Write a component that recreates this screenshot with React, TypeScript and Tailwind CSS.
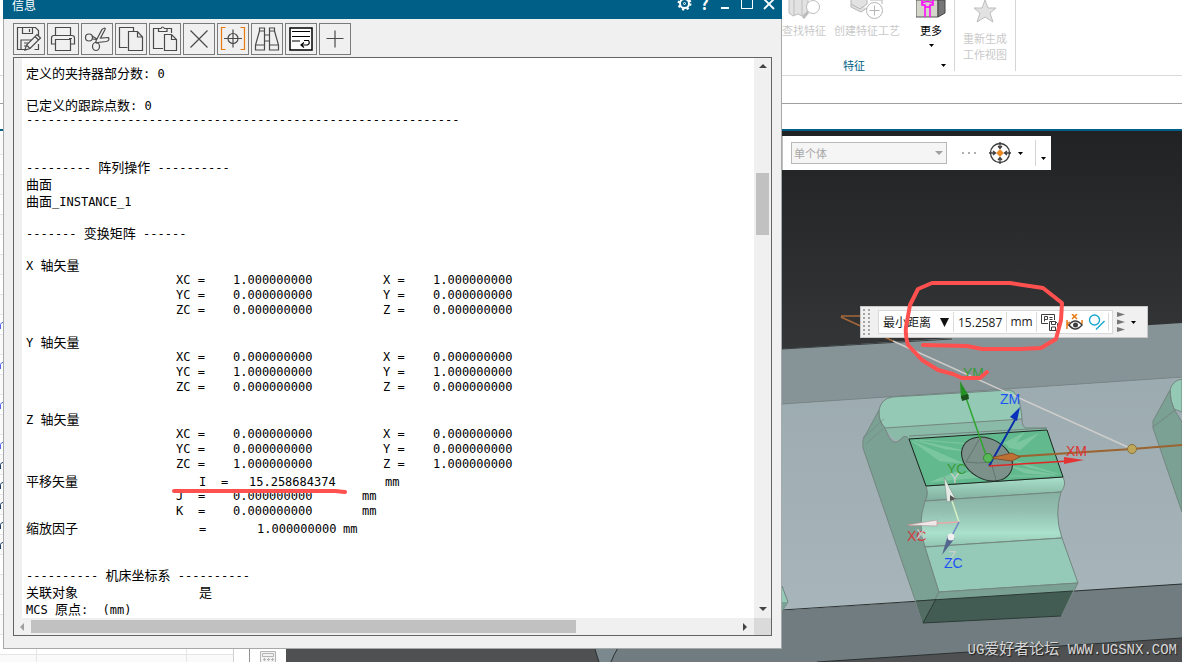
import type { ReactNode } from 'react';

type Cell = [width: string, text: string];
type Line = string | Cell[];

const vectorRow = (axis: string, value: string, otherValue = value): Cell[] => [
  ['w-[150px]', ''],
  ['w-[57px]', `${axis}C =`],
  ['w-[150px]', value],
  ['w-[50px]', `${axis} =`],
  ['', otherValue],
];

const ONE = '1.000000000';
const ZERO = '0.000000000';

const lines: Line[] = [
  '定义的夹持器部分数: 0',
  '',
  '已定义的跟踪点数: 0',
  '-'.repeat(60),
  '',
  '',
  '--------- 阵列操作 ----------',
  '曲面',
  '曲面_INSTANCE_1',
  '',
  '------- 变换矩阵 ------',
  '',
  'X 轴矢量',
  vectorRow('X', ONE),
  vectorRow('Y', ZERO),
  vectorRow('Z', ZERO),
  '',
  'Y 轴矢量',
  vectorRow('X', ZERO),
  vectorRow('Y', ONE),
  vectorRow('Z', ZERO),
  '',
  'Z 轴矢量',
  vectorRow('X', ZERO),
  vectorRow('Y', ZERO),
  vectorRow('Z', ONE),
  [['w-[173px]', '平移矢量'], ['w-[22px]', 'I'], ['w-[28px]', '='], ['w-[136px]', '15.258684374'], ['', 'mm']],
  [['w-[150px]', ''], ['w-[22px]', 'J'], ['w-[35px]', '='], ['w-[129px]', ZERO], ['', 'mm']],
  [['w-[150px]', ''], ['w-[22px]', 'K'], ['w-[35px]', '='], ['w-[129px]', ZERO], ['', 'mm']],
  [['w-[173px]', '缩放因子'], ['w-[58px]', '='], ['w-[86px]', ONE], ['', 'mm']],
  '',
  '',
  '---------- 机床坐标系 ----------',
  [['w-[173px]', '关联对象'], ['', '是']],
  'MCS 原点:  (mm)',
];

const CJK = /([\u4e00-\u9fff]+)/;

// Chinese runs are set one pixel larger than the monospaced Latin text.
function MixedText({ text }: { text: string }) {
  return (
    <>
      {text.split(CJK).map((part, i) =>
        CJK.test(part) ? (
          <span key={i} className="font-['Noto_Sans_CJK_SC',sans-serif] text-[13px]">
            {part}
          </span>
        ) : (
          part
        ),
      )}
    </>
  );
}

function ReportLine({ line }: { line: Line }) {
  const content = typeof line === 'string' ? line : line.map(([, text]) => text).join('');
  const height = CJK.test(content) ? 'h-[17px] leading-[17px]' : 'h-[15px] leading-[15px]';
  return (
    <div className={`flex items-baseline whitespace-pre ${height}`}>
      {typeof line === 'string' ? (
        <span>
          <MixedText text={line} />
        </span>
      ) : (
        line.map(([width, text], i) => (
          <span key={i} className={`shrink-0 ${width}`}>
            <MixedText text={text} />
          </span>
        ))
      )}
    </div>
  );
}

function ToolIcon({ children }: { children: ReactNode }) {
  return (
    <svg width="26" height="26" viewBox="0 0 26 26" fill="none" stroke="#4a4a4a" strokeWidth="1.2">
      {children}
    </svg>
  );
}

const tools: { name: string; icon: ReactNode }[] = [
  {
    name: '另存为',
    icon: (
      <>
        <path d="M9 23.5H1.5V1.5h18l3 3v6M22.500 18v5.500h-4M6.500 1.500v6h10v-6M13.500 3v3M5 23v-9h12M8 17h4M8 20h2" />
        <path d="M9 24l1.500-5L21 8.500l3.500 3.500L14 22.500zM10.500 19l3.500 3.500M19 10.500l3.500 3.500" fill="#f0f0f0" />
      </>
    ),
  },
  {
    name: '打印',
    icon: (
      <>
        <path d="M5.500 9V1.500h15V9M5.500 18H1.500V12q0-2.500 2.500-2.500h18q2.500 0 2.500 2.500v6h-4M19 12.500h3" />
        <path d="M5.500 13.500h15v11h-15z" />
      </>
    ),
  },
  {
    name: '剪切',
    icon: (
      <>
        <circle cx="5" cy="11.500" r="3.500" />
        <ellipse cx="12" cy="20.500" rx="3.500" ry="4" />
        <path d="M8 10l5 3L18 3.500q4-3 3 0L16.500 12l8-.5q1.500 3-2 4l-9 1-1 1M8.500 13l4 .5-1 3.500" />
      </>
    ),
  },
  {
    name: '复制',
    icon: (
      <>
        <path d="M9.500 21.500h-8v-20h14v4" />
        <path d="M10.500 5.500h9l5 5.500v13.500h-14zM19.500 5.500V11h5" />
      </>
    ),
  },
  {
    name: '粘贴',
    icon: (
      <>
        <path d="M11 22.500H1.500v-20h5M15 2.500h4.500V7M6.500 5.500v-3h2.500q1.500-3 3.500 0H15v3z" />
        <path d="M12.500 8.500h7l5 5v11h-12zM19.500 8.500v5h5" />
      </>
    ),
  },
  { name: '删除', icon: <path d="M4.500 4.500l17 17M21.500 4.500l-17 17" /> },
  {
    name: '定位',
    icon: (
      <>
        <path d="M5.500 1.500h-4v22h4M20.500 1.500h4v22h-4" stroke="#e87a10" />
        <circle cx="13" cy="12.500" r="5" />
        <path d="M13 3.500v18M4 12.500h18" />
      </>
    ),
  },
  {
    name: '查找',
    icon: (
      <path d="M5.500 2h5v3h-5zM15.500 2h5v3h-5zM5.500 5l-4 14v5h9V5M20.500 5l4 14v5h-9V5M1.500 19h9M15.500 19h9M10.500 9h5v6h-5" />
    ),
  },
  {
    name: '自动换行',
    icon: (
      <>
        <path d="M2 2h22v22H2z" fill="#fff" stroke="#000" strokeWidth="1.500" />
        <path d="M4 5.500h18M4 10.500h18M4 15h8M16 14.500h4.500q2 3-1 4.500h-6M16 16.500L13 19l3 2.500" stroke="#000" />
      </>
    ),
  },
  { name: '新建', icon: <path d="M13 4.500v17M4.500 12.500h17" /> },
];

function Triangle({ dir, color = '#444444' }: { dir: 'up' | 'down' | 'left' | 'right'; color?: string }) {
  const paths = { up: 'M1 6h8L5 2z', down: 'M1 3h8L5 7z', left: 'M7 1v8L3 5z', right: 'M3 1v8l4-4z' };
  return (
    <svg width="10" height="10" viewBox="0 0 10 10" className="shrink-0">
      <path d={paths[dir]} fill={color} />
    </svg>
  );
}

function Caret() {
  return (
    <svg width="5" height="3" viewBox="0 0 5 3">
      <path d="M0 0h5L2.500 3z" fill="#000" />
    </svg>
  );
}

function InfoWindow() {
  return (
    <section className="absolute top-0 bottom-[13px] left-[3px] z-20 flex w-[779px] flex-col border-x border-b border-[#a5a9aa] bg-[#f0f0f0]">
      <header className="-mx-px flex h-[19px] shrink-0 items-start justify-between bg-[#005f87] pr-1.5 pl-[9px] text-white">
        <h1 className="mt-[-4px] text-[12px] leading-[18px]">信息</h1>
        <div className="mt-[-4px] flex items-center gap-[5px]">
          <button aria-label="设置" className="flex size-[15px] items-center justify-center">
            <svg width="15" height="15" viewBox="0 0 15 15" fill="none" stroke="#fff">
              <circle cx="7.500" cy="7.500" r="4.500" strokeWidth="2" />
              <circle cx="7.500" cy="7.500" r="6" strokeWidth="2" strokeDasharray="2.300 2.412" />
              <circle cx="7.500" cy="7.500" r="1" />
            </svg>
          </button>
          <button aria-label="帮助" className="size-[15px] text-[16px] leading-[15px] font-bold">
            ?
          </button>
          <button aria-label="最小化" className="flex size-[15px] items-end justify-center pb-0.5">
            <span className="h-0.5 w-2 bg-white" />
          </button>
          <button aria-label="最大化" className="ml-[2px] flex size-[15px] items-center justify-center">
            <span className="h-[11px] w-3 border border-t-2 border-white" />
          </button>
          <button aria-label="关闭" className="ml-[2px] flex size-[15px] items-center justify-center">
            <svg width="12" height="12" viewBox="0 0 12 12" stroke="#fff" strokeWidth="1.800">
              <path d="M1 1l10 10M11 1L1 11" />
            </svg>
          </button>
        </div>
      </header>

      <div className="flex gap-0.5 px-[9px] pt-1 pb-0.5">
        {tools.map(({ name, icon }) => (
          <button
            key={name}
            aria-label={name}
            className="flex size-8 items-center justify-center border border-[#7b7b7b]"
          >
            <ToolIcon>{icon}</ToolIcon>
          </button>
        ))}
      </div>

      <div className="mx-[9px] mb-3 grid min-h-0 flex-1 grid-cols-[1fr_17px] grid-rows-[1fr_17px] border border-[#646464] bg-[#f0f0f0]">
        <div className="ml-2 overflow-hidden bg-white pt-1.5 pl-1 font-['DejaVu_Sans_Mono','Noto_Sans_CJK_SC',monospace] text-[12px] text-black">
          {lines.map((line, i) => (
            <ReportLine key={i} line={line} />
          ))}
        </div>
        <div className="flex flex-col items-center justify-between py-1">
          <Triangle dir="up" />
          <div className="mt-[101px] mb-auto h-[62px] w-[13px] bg-[#c1c1c1]" />
          <Triangle dir="down" />
        </div>
        <div className="flex items-center pr-1 pl-[3px]">
          <Triangle dir="left" color="#a0a0a0" />
          <div className="mr-auto ml-1 h-[13px] w-[545px] bg-[#c1c1c1]" />
          <Triangle dir="right" />
        </div>
        <div className="bg-[#dadada]" />
      </div>
    </section>
  );
}

function Ribbon() {
  return (
    <div className="relative shrink-0 bg-white">
      <div className="flex h-[76px] border-b border-[#dadada] pl-[782px] text-[11px] leading-4 whitespace-nowrap">
        <div className="flex w-[172px] flex-col">
          <div className="flex flex-1 text-[#c9c9c9]">
            <button className="flex w-[44px] flex-col items-center">
              <svg width="36" height="22" viewBox="0 0 36 22" fill="#e2e2e2" stroke="#bdbdbd">
                <path d="M3 0v13l4 3 5-2 4 2 6-4V0" />
                <path d="M8 0v15M16 0v15" />
                <circle cx="27" cy="7" r="6.500" fill="#fff" />
                <path d="M22 12l-5 6" strokeWidth="3" />
              </svg>
              查找特征
            </button>
            <button className="ml-2 flex w-[66px] flex-col items-center">
              <svg width="34" height="22" viewBox="0 0 34 22" fill="#e2e2e2" stroke="#b5b5b5">
                <path d="M1 0v4l9 5 7-5V0M1 4v3l10 5 6-4" />
                <path d="M20 0h12v4" fill="none" />
                <circle cx="24.500" cy="10.500" r="8" fill="#fff" />
                <path d="M24.500 5.500v10M19.500 10.500h10" />
              </svg>
              创建特征工艺
            </button>
            <button className="ml-[16px] flex w-[30px] flex-col items-center text-black">
              <svg width="30" height="22" viewBox="0 0 30 22">
                <path d="M0 0h22v17H0z" fill="#d4d6c9" stroke="#555" />
                <path d="M22 0h7v13l-7 4z" fill="#777" stroke="#444" />
                <path d="M6 0v5h3v12M17 0v5h-3v12M6 3q5-3 11 0M9 7h5" fill="none" stroke="#ff00ff" strokeWidth="1.500" />
              </svg>
              更多
              <span className="mt-1.5">
                <Caret />
              </span>
            </button>
          </div>
          <div className="flex h-[20px] items-center justify-end gap-[76px] pr-2 text-[#005f87]">
            特征
            <button aria-label="特征选项" className="p-0">
              <Caret />
            </button>
          </div>
        </div>
        <div className="mb-1 flex w-[62px] flex-col items-center border-x border-[#d5d5d5]">
          <button className="flex flex-col items-center text-[#c9c9c9]">
            <svg width="24" height="30" viewBox="0 0 24 30">
              <path d="M12 0l3 8h8l-6 5 3 9-8-5-8 5 3-9-6-5h8z" fill="#e2e2e2" stroke="#bdbdbd" />
            </svg>
            <span>重新生成</span>
            <span>工作视图</span>
          </button>
        </div>
      </div>
      <div className="h-[28px] border-b border-[#a0a0a0]" />
      <div className="h-[27px] border-b-2 border-[#005f87]" />
    </div>
  );
}

// Rows of the tree whose status glyph shows beside the window.
const navMarks: Record<number, string> = {
  9: '#5560e8',
  11: '#5560e8',
  13: '#5560e8',
  15: '#5560e8',
  16: '#20406a',
  17: '#20406a',
  18: '#20406a',
  19: '#20406a',
  20: '#20406a',
};

function Navigator() {
  return (
    <aside className="flex w-[286px] shrink-0 overflow-hidden bg-white">
      <div className="w-[234px] border-r border-[#d0d0d0] pt-1">
        {Array.from({ length: 27 }, (_, row) => (
          <div key={row} className="flex h-5 border-b border-[#e5e5e5] odd:bg-[#fafafa]">
            <div className="flex w-[37px] items-center border-r border-[#e5e5e5]">
              {navMarks[row] && (
                <svg width="3" height="8" viewBox="0 0 3 8" fill="none" stroke={navMarks[row]}>
                  <path d="M.5 8V3.500Q1 1.500 3 1.500" />
                </svg>
              )}
            </div>
            <div className="w-[150px] border-r border-[#e5e5e5]" />
          </div>
        ))}
      </div>
      <div className="ml-[15px] flex flex-1 items-end justify-center border-l border-[#909090]">
        <svg width="16" height="11" viewBox="0 0 16 11" fill="#f2f2f2" stroke="#b5b5b5">
          <path d="M.5 14V.5h15V14M2.500 2.500h11v3h-11z" />
          <path d="M3 8.500h3M7 8.500h3M11 8.500h3M4.500 7v3M8.500 7v3M12.500 7v3" />
        </svg>
      </div>
    </aside>
  );
}

function Scene() {
  return (
    <svg
      className="absolute inset-0 size-full"
      viewBox="286 131 896 531"
      preserveAspectRatio="xMinYMin slice"
      fontFamily="Liberation Sans, Arial, sans-serif"
      fontSize="14"
    >
      <defs>
        <linearGradient id="sky" x1="0" y1="0" x2="0" y2="1">
          <stop offset="0" stopColor="#212223" />
          <stop offset="1" stopColor="#505153" />
        </linearGradient>
        <linearGradient id="deck" x1="0" y1="0" x2="0" y2="1">
          <stop offset="0" stopColor="#9cabb0" />
          <stop offset="1" stopColor="#a8b6bb" />
        </linearGradient>
        <linearGradient id="step" x1="0" y1="0" x2="0" y2="1">
          <stop offset="0" stopColor="#a9e0cb" />
          <stop offset="1" stopColor="#80ae9e" />
        </linearGradient>
        <linearGradient id="groove" x1="0" y1="0" x2="0" y2="1">
          <stop offset="0" stopColor="#86b1a2" />
          <stop offset="0.350" stopColor="#93bfb0" />
          <stop offset="0.750" stopColor="#aae1cc" />
          <stop offset="1" stopColor="#8fc3b0" />
        </linearGradient>
      </defs>
      <rect x="286" y="131" width="896" height="531" fill="url(#sky)" />
      <path d="M595 350L782 349l400-26v54L782 404H595z" fill="#879497" />
      <path d="M595 412L782 404l400-27v207L782 611l-187 10z" fill="url(#deck)" />
      <path d="M782 404l400-27" stroke="#7b8789" />
      <path d="M593 640L782 611l400-27v54L817 662H599z" fill="#717c80" />
      <path d="M593 640h27l-9 22h-12z" fill="#7b898f" />
      <path d="M782 610l400-26M817 662l365-24M593 643l6 19M618 648q-4 6-7 14" stroke="#2c3232" fill="none" />
      <path d="M760 349h22l170-10" stroke="#3a4042" fill="none" />
      <path d="M779 586l3 0 6 16-6 9h-3z" fill="#94cab7" stroke="#6d837c" />
      <path d="M782 602h6l-6 9z" fill="#7ba195" />

      <path d="M885 428l132-8 6 7 24 1v3l-138 8-4-4-6 5-6-1z" fill="#8abba9" />
      <g stroke="#73867f" strokeWidth="1">
        <path d="M879 410q2-11 13-13l117-7q11 1 13 29l-137 9q-7-8-6-18z" fill="#94c9b6" />
        <path d="M1022 419q0 8 4 9l21 0M909 436l138-8" fill="none" />
        <path d="M879 410q-1 12 6 18c4 10 8 18 15 12 5-7 8-2 9-1l17 47q3 8-1 15-5 16 0 46l14 45-16 31-60-175q-1-10 3-14z" fill="#7ba195" />
        <path d="M863 438l21-19M866 444l19-17" fill="none" opacity=".6" />
        <path d="M926 486l137-9q4 8-2 15l-136 9q4-6 1-15z" fill="url(#step)" />
        <path d="M925 501l136-9q-7 23 1 46l-137 9q-8-22 0-46z" fill="url(#groove)" />
        <path d="M925 547l137-9 16 45-139 9z" fill="#94cab7" />
        <path d="M939 592l139-9-17 33-138 7z" fill="#7ba195" />
      </g>
      <path d="M916 601l157-10-12 25-138 7z" fill="#435c53" />
      <path d="M916 601l20-2-13 24z" fill="#536d64" />
      <path d="M916 601l157-10M923 623l13-24M923 623l138-7" stroke="#2b3a35" fill="none" />
      <path d="M909 439l138-9 16 47-137 9z" fill="#62b98d" stroke="#1b2520" />
      <path d="M912 441l50 22-22-2zM914 440l52 11-20-2zM920 440l50 4zM931 482l60-6-35-4zM936 480l40-9zM1004 443l20-10-12 15zM1008 447l30-13-18 16zM1012 460l46 14-30-7zM1010 466l45 9-30-2zM1000 476l50 0z" fill="#8acfac" stroke="#9ad7b8" strokeWidth=".5" opacity=".6" />
      <ellipse cx="987" cy="459" rx="27" ry="20" transform="rotate(30 987 459)" fill="#7b918a" stroke="#252b29" />
      <path d="M980 438l-14 24q12 2 25 0l5 18" stroke="#66756f" fill="none" />

      <path d="M1170 390q2-9 12-11v33l-8-3q-4-8-4-19z" fill="#94c9b6" stroke="#73867f" />
      <path d="M1170 390l-17 31v7l29 84v-90l-8-13q-4-8-4-19z" fill="#7ba195" stroke="#73867f" />
      <path d="M1153 427l22-17" stroke="#73867f" />

      <path d="M841 316h24M841 317l52 24" stroke="#a5683a" strokeWidth="1.500" />
      <path d="M893 341l239 108" stroke="#cfcccb" strokeWidth="1.500" />
      <path d="M1010 457l122-8 50-4" stroke="#9b632f" strokeWidth="2" fill="none" />
      <circle cx="1132" cy="449" r="4.500" fill="#bfa75a" stroke="#857339" />

      <text x="963" y="378" fill="#379b37">YM</text>
      <path d="M987 458l-23-66" stroke="#2fa52f" strokeWidth="1.500" />
      <path d="M960 381l1 18 8-3z" fill="#259225" />
      <path d="M961 396l1 5 7-2-1-5z" fill="#1c521c" />
      <text x="1000" y="404" fill="#1d52f4">ZM</text>
      <path d="M989 466l27-48" stroke="#0a2da8" strokeWidth="2" />
      <path d="M1020 407l-10 10 7 4z" fill="#0a32bb" />
      <text x="1066" y="456" fill="#dc3434">XM</text>
      <path d="M989 466l80-5" stroke="#e12626" strokeWidth="1.500" />
      <path d="M1084 460l-20-3v7z" fill="#e23434" />
      <path d="M990 458l22-5 8 4-8 4z" fill="#bf7134" stroke="#86502a" />
      <circle cx="988" cy="458" r="4.500" fill="#56b856" stroke="#398439" />

      <text x="947" y="474" fill="#379b37">YC</text>
      <text x="950" y="483" fill="#c8d2ce">Y</text>
      <path d="M959 522l-14-42" stroke="#d7f0c4" strokeWidth="1.500" />
      <path d="M944 477l3 25 9-2z" fill="#e4ebe5" stroke="#6c8278" strokeWidth=".5" />
      <path d="M950 495v6l6-2z" fill="#555" />
      <path d="M959 522l-50 3" stroke="#e9a7a7" strokeWidth="1.500" />
      <path d="M907 525l30-5v6z" fill="#eee8e8" stroke="#a98787" strokeWidth=".5" />
      <path d="M959 522l-14 27" stroke="#6c84c5" strokeWidth="1.500" />
      <path d="M942 555l6-20 7 3z" fill="#53668e" />
      <circle cx="951" cy="537" r="3.500" fill="#f0f0f0" />
      <text x="907" y="541" fill="#d23c3c">XC</text>
      <text x="916" y="539" fill="#c9c9c9">X</text>
      <text x="948" y="561" fill="#c9d0d0">Z</text>
      <text x="944" y="568" fill="#1d52f4">ZC</text>
    </svg>
  );
}

function SelectionBar() {
  return (
    <div className="absolute top-[5px] left-[496px] flex h-[34px] w-[269px] items-center border-l border-[#c0c0c0] bg-white text-[#a8a8a8]">
      <label className="sr-only" htmlFor="scope">
        选择范围
      </label>
      <div className="relative ml-2 flex w-[156px] items-center">
        <select
          id="scope"
          disabled
          className="h-[22px] w-full appearance-none border border-[#b8b8b8] bg-[#f5f5f5] pl-0.5 text-[11px]"
        >
          <option>单个体</option>
        </select>
        <span className="pointer-events-none absolute right-[3px] flex">
          <Triangle dir="down" color="#a0a0a0" />
        </span>
      </div>
      <span className="ml-[15px] flex gap-1">
        <i className="size-0.5 bg-[#b0b0b0]" />
        <i className="size-0.5 bg-[#b0b0b0]" />
        <i className="size-0.5 bg-[#b0b0b0]" />
      </span>
      <button aria-label="捕捉点" className="ml-3 flex items-center gap-1.5">
        <svg width="24" height="24" viewBox="0 0 24 24" fill="none" stroke="#3c3c3c" strokeWidth="1.300">
          <circle cx="12" cy="12" r="9.500" />
          <path d="M12 1v6M12 17v6M1 12h6M17 12h6M10 5l2 2.500L14 5M10 19l2-2.500 2 2.500M5 10l2.500 2L5 14M19 10l-2.500 2 2.500 2" />
          <path d="M12 8.500l3.500 3.500-3.500 3.500L8.500 12z" fill="#ee8a1c" stroke="#d06a10" strokeWidth=".5" />
        </svg>
        <Caret />
      </button>
      <button aria-label="更多选项" className="ml-auto flex h-[26px] w-4 items-end justify-center border-l border-[#d5d5d5] pb-1.5">
        <Caret />
      </button>
    </div>
  );
}

function MeasureBar() {
  return (
    <div className="absolute top-[175px] left-[574px] flex h-8 w-[288px] items-center border border-[#c8c8c8] bg-[#f0f0f0] pl-0.5 text-[#1a1a1a]">
      <svg width="7" height="28" viewBox="0 0 7 28">
        {[1, 5, 9, 13, 17, 21, 25].map((y) => (
          <path key={y} d={`M0 ${y}h2v2h-2zM5 ${y}h2v2h-2z`} fill="#a5a5a5" />
        ))}
      </svg>
      <div className="ml-2 flex h-6 items-center border border-[#d8d8d8] bg-white text-[13px]">
        <button className="flex h-5 w-[75px] items-center justify-between border-r border-[#dcdcdc] pr-1 pl-1 text-[12px]">
          最小距离
          <svg width="9" height="9" viewBox="0 0 9 9">
            <path d="M0 0h9L4.500 9z" fill="#111" />
          </svg>
        </button>
        <input
          aria-label="最小距离"
          readOnly
          value="15.2587"
          className="h-5 w-[53px] border-r border-[#dcdcdc] pl-1 font-['Open_Sans',sans-serif] text-[12px] outline-none"
        />
        <span className="h-5 w-[30px] border-r border-[#dcdcdc] text-center font-['Open_Sans',sans-serif] text-[12px] leading-5">
          mm
        </span>
        <button aria-label="保存表达式" className="flex w-[25px] justify-center">
          <svg width="17" height="17" viewBox="0 0 17 17" fill="none" stroke="#3d3d3d">
            <path d="M7 9.500H.5v-9h13V6M3.500 7.500v-5h3v3h-3M8.500 3.500h3M8.500 5.500h3" />
            <path d="M8.500 7.500h6l2 2v7h-8zM10.500 7.500v3h4v-3M10.500 16v-3h4v3" fill="#fff" />
          </svg>
        </button>
        <button aria-label="显示标注" className="flex w-[24px] justify-center">
          <svg width="17" height="17" viewBox="0 0 17 17" fill="none">
            <path d="M6 0l5 5M11 0L6 5M1 6v9M1 10l3-2M1 10l3 2M16 6v4" stroke="#e87a10" strokeWidth="1.500" />
            <path d="M3 11q6-8 13 0-7 8-13 0z" fill="#fff" stroke="#3d3d3d" strokeWidth="1.500" />
            <circle cx="9.500" cy="11" r="2.500" fill="#3d3d3d" />
          </svg>
        </button>
        <button aria-label="关联测量" className="mr-[3px] flex w-[23px] justify-center border-r border-[#dcdcdc]">
          <svg width="18" height="18" viewBox="0 0 18 18" fill="none" stroke="#19a7cf" strokeWidth="1.400">
            <circle cx="6.500" cy="7" r="5" />
            <path d="M8 16.500l8.500-8.500" />
          </svg>
        </button>
      </div>
      <button aria-label="工具条选项" className="ml-1 flex items-center gap-1.5">
        <svg width="8" height="20" viewBox="0 0 8 20" fill="#777">
          <path d="M0 0l8 2.500L0 5zM0 7.500l8 2.500-8 2.500zM0 15l8 2.500L0 20z" />
        </svg>
        <Caret />
      </button>
    </div>
  );
}

function Markup() {
  return (
    <svg
      className="pointer-events-none absolute inset-0 z-30 size-full"
      viewBox="0 0 1182 662"
      preserveAspectRatio="xMinYMin slice"
      fill="none"
      stroke="#ff5050"
      strokeWidth="4"
      strokeLinecap="round"
      strokeLinejoin="round"
    >
      <path d="M174 491h161l10 1" />
      <path d="M987 372l-7 6h-18l-9-4-15-4-16-10-14-15q-3-10-2-18l4-22 8-16 14-6h78l33 5 19 15-1 17-5 19-15 9-21 1h-38l-15-3-44-1" />
    </svg>
  );
}

export default function App() {
  return (
    <div className="relative flex h-screen flex-col overflow-hidden bg-white font-['Noto_Sans_CJK_SC',sans-serif]">
      <Ribbon />
      <main className="flex min-h-0 flex-1">
        <Navigator />
        <div className="relative flex-1 overflow-hidden">
          <Scene />
          <SelectionBar />
          <MeasureBar />
          <p className="absolute right-[5px] bottom-0 font-['Liberation_Mono','Noto_Sans_CJK_SC',monospace] text-[14px] leading-[22px] whitespace-nowrap text-[#d8d8d8] [text-shadow:1px_1px_1px_#222]">
            UG<span className="text-[15px]">爱好者论坛</span> WWW.UGSNX.COM
          </p>
        </div>
      </main>
      <InfoWindow />
      <Markup />
    </div>
  );
}
